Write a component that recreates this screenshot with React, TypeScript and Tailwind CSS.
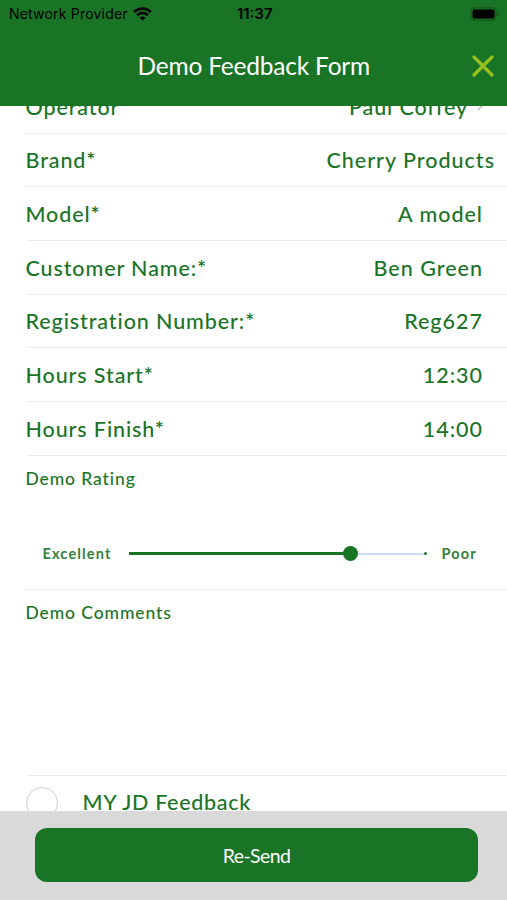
import { useState } from 'react';

type Field = { label: string; value: string; valueClass?: string };

const fields: Field[] = [
  { label: 'Brand*', value: 'Cherry Products', valueClass: 'pr-[13px]' },
  { label: 'Model*', value: 'A model' },
  { label: 'Customer Name:*', value: 'Ben Green' },
  { label: 'Registration Number:*', value: 'Reg627' },
  { label: 'Hours Start*', value: '12:30' },
  { label: 'Hours Finish*', value: '14:00' },
];

function StatusBar() {
  return (
    <div className="grid h-[27px] grid-cols-3 items-center pl-[9px] pr-[6.5px] font-['Inter',sans-serif] text-black">
      <div className="flex items-center gap-[5px]">
        <span className="whitespace-nowrap text-[14px] leading-none tracking-[0.2px]">Network Provider</span>
        <svg width="19" height="14" viewBox="0 0 19 14" className="shrink-0" fill="none" stroke="black" strokeWidth="2.8">
          <path d="M1.1 5.1C5.7.4 13.3.4 17.9 5.1" />
          <path d="M4.1 8.2C7.1 5.2 11.9 5.2 14.9 8.2" />
          <path d="M9.5 13.6 6.5 10.5C8.2 9 10.8 9 12.5 10.5Z" fill="black" stroke="none" />
        </svg>
      </div>
      <span className="text-center text-[15px] font-semibold leading-none">11:37</span>
      <svg width="30" height="14" viewBox="0 0 30 14" className="justify-self-end" fill="none">
        <rect x="1" y=".9" width="25" height="12.2" rx="3.3" stroke="#115019" />
        <rect x="2.5" y="2.4" width="22" height="9.2" rx="1.8" fill="black" />
        <path d="M27.5 5v4q1.5-.6 1.5-2t-1.5-2Z" fill="#115019" />
      </svg>
    </div>
  );
}

function Row({ label, value, valueClass = 'pr-[25px]' }: Field) {
  return (
    <div className={`flex h-[53.67px] shrink-0 items-center justify-between border-b border-[#ececec] pt-[2px] text-[21.5px] leading-none ${valueClass}`}>
      <span className="tracking-[0.9px]">{label}</span>
      <span className="-mr-px tracking-[1px]">{value}</span>
    </div>
  );
}

export default function App() {
  const [rating] = useState(74.4);
  return (
    <div className="flex h-[900px] w-[507px] flex-col overflow-hidden bg-white font-['Lato',sans-serif] text-[#1a7426]">
      <header className="h-[105.5px] shrink-0 bg-[#1a7426]">
        <StatusBar />
        <div className="grid h-[78px] grid-cols-[1fr_auto_1fr] items-center pr-[13.5px]">
          <h1 className="col-start-2 pl-[14px] text-[24.5px] leading-none tracking-[-0.2px] text-white">Demo Feedback Form</h1>
          <svg width="22" height="22" viewBox="0 0 22 22" className="justify-self-end" stroke="#95c11f" strokeWidth="3.2" strokeLinecap="round">
            <path d="M2 2 20 20M20 2 2 20" />
          </svg>
        </div>
      </header>

      <main className="flex min-h-0 flex-1 flex-col overflow-hidden pl-[25.5px] font-medium">
        <div className="-mt-[25.5px] flex h-[53.67px] shrink-0 items-center border-b border-[#ececec] pr-[23px] pt-[2px] text-[21.5px] leading-none tracking-[0.9px]">
          <span className="flex-1">Operator</span>
          <span>Paul Coffey</span>
          <svg width="7" height="12" viewBox="0 0 7 12" className="-mt-[5px] ml-[9px]" fill="none" stroke="#c7c7cc" strokeWidth="1.8">
            <path d="m1 1 5 5-5 5" />
          </svg>
        </div>
        {fields.map((field) => (
          <Row key={field.label} {...field} />
        ))}
        <section className="h-[134px] shrink-0 border-b border-[#ececec] pt-[14px]">
          <h2 className="text-[17.5px] leading-[18px] tracking-[0.9px]">Demo Rating</h2>
          <div className="mt-[58px] flex h-4 items-center pl-[17px] text-[14.5px] font-bold leading-none">
            <span className="w-[86.5px] pt-[2px] tracking-[1.15px] opacity-90">Excellent</span>
            <div className="flex w-[298px] items-center">
              <div className="h-[2.5px] bg-[#1a7426]" style={{ width: `${rating}%` }} />
              <div className="relative z-10 -mx-[7.5px] size-[15px] shrink-0 rounded-full bg-[#1a7426]" />
              <div className="h-[2px] flex-1 bg-[#c8dcfb]" />
              <div className="size-[3px] rounded-full bg-[#1a7426]" />
            </div>
            <span className="ml-[14.5px] pt-[2px] tracking-[1.15px] opacity-90">Poor</span>
          </div>
        </section>
        <section className="h-[186px] shrink-0 border-b border-[#ececec] pt-[14px]">
          <h2 className="text-[17.5px] leading-[18px] tracking-[0.9px]">Demo Comments</h2>
        </section>
        <div className="flex h-[54px] shrink-0 items-center gap-[25px] text-[21.5px] leading-none tracking-[0.7px]">
          <span className="size-8 rounded-full border-[1.5px] border-[#cecece]" />
          <span>MY JD Feedback</span>
        </div>
      </main>

      <footer className="h-[89px] shrink-0 bg-[#d9d9d9] pl-[35px] pr-[29px] pt-[17px]">
        <button className="h-[54px] w-full rounded-[12px] bg-[#1a7426] pt-px text-[19.5px] leading-none tracking-[-0.6px] text-white">Re-Send</button>
      </footer>
    </div>
  );
}
